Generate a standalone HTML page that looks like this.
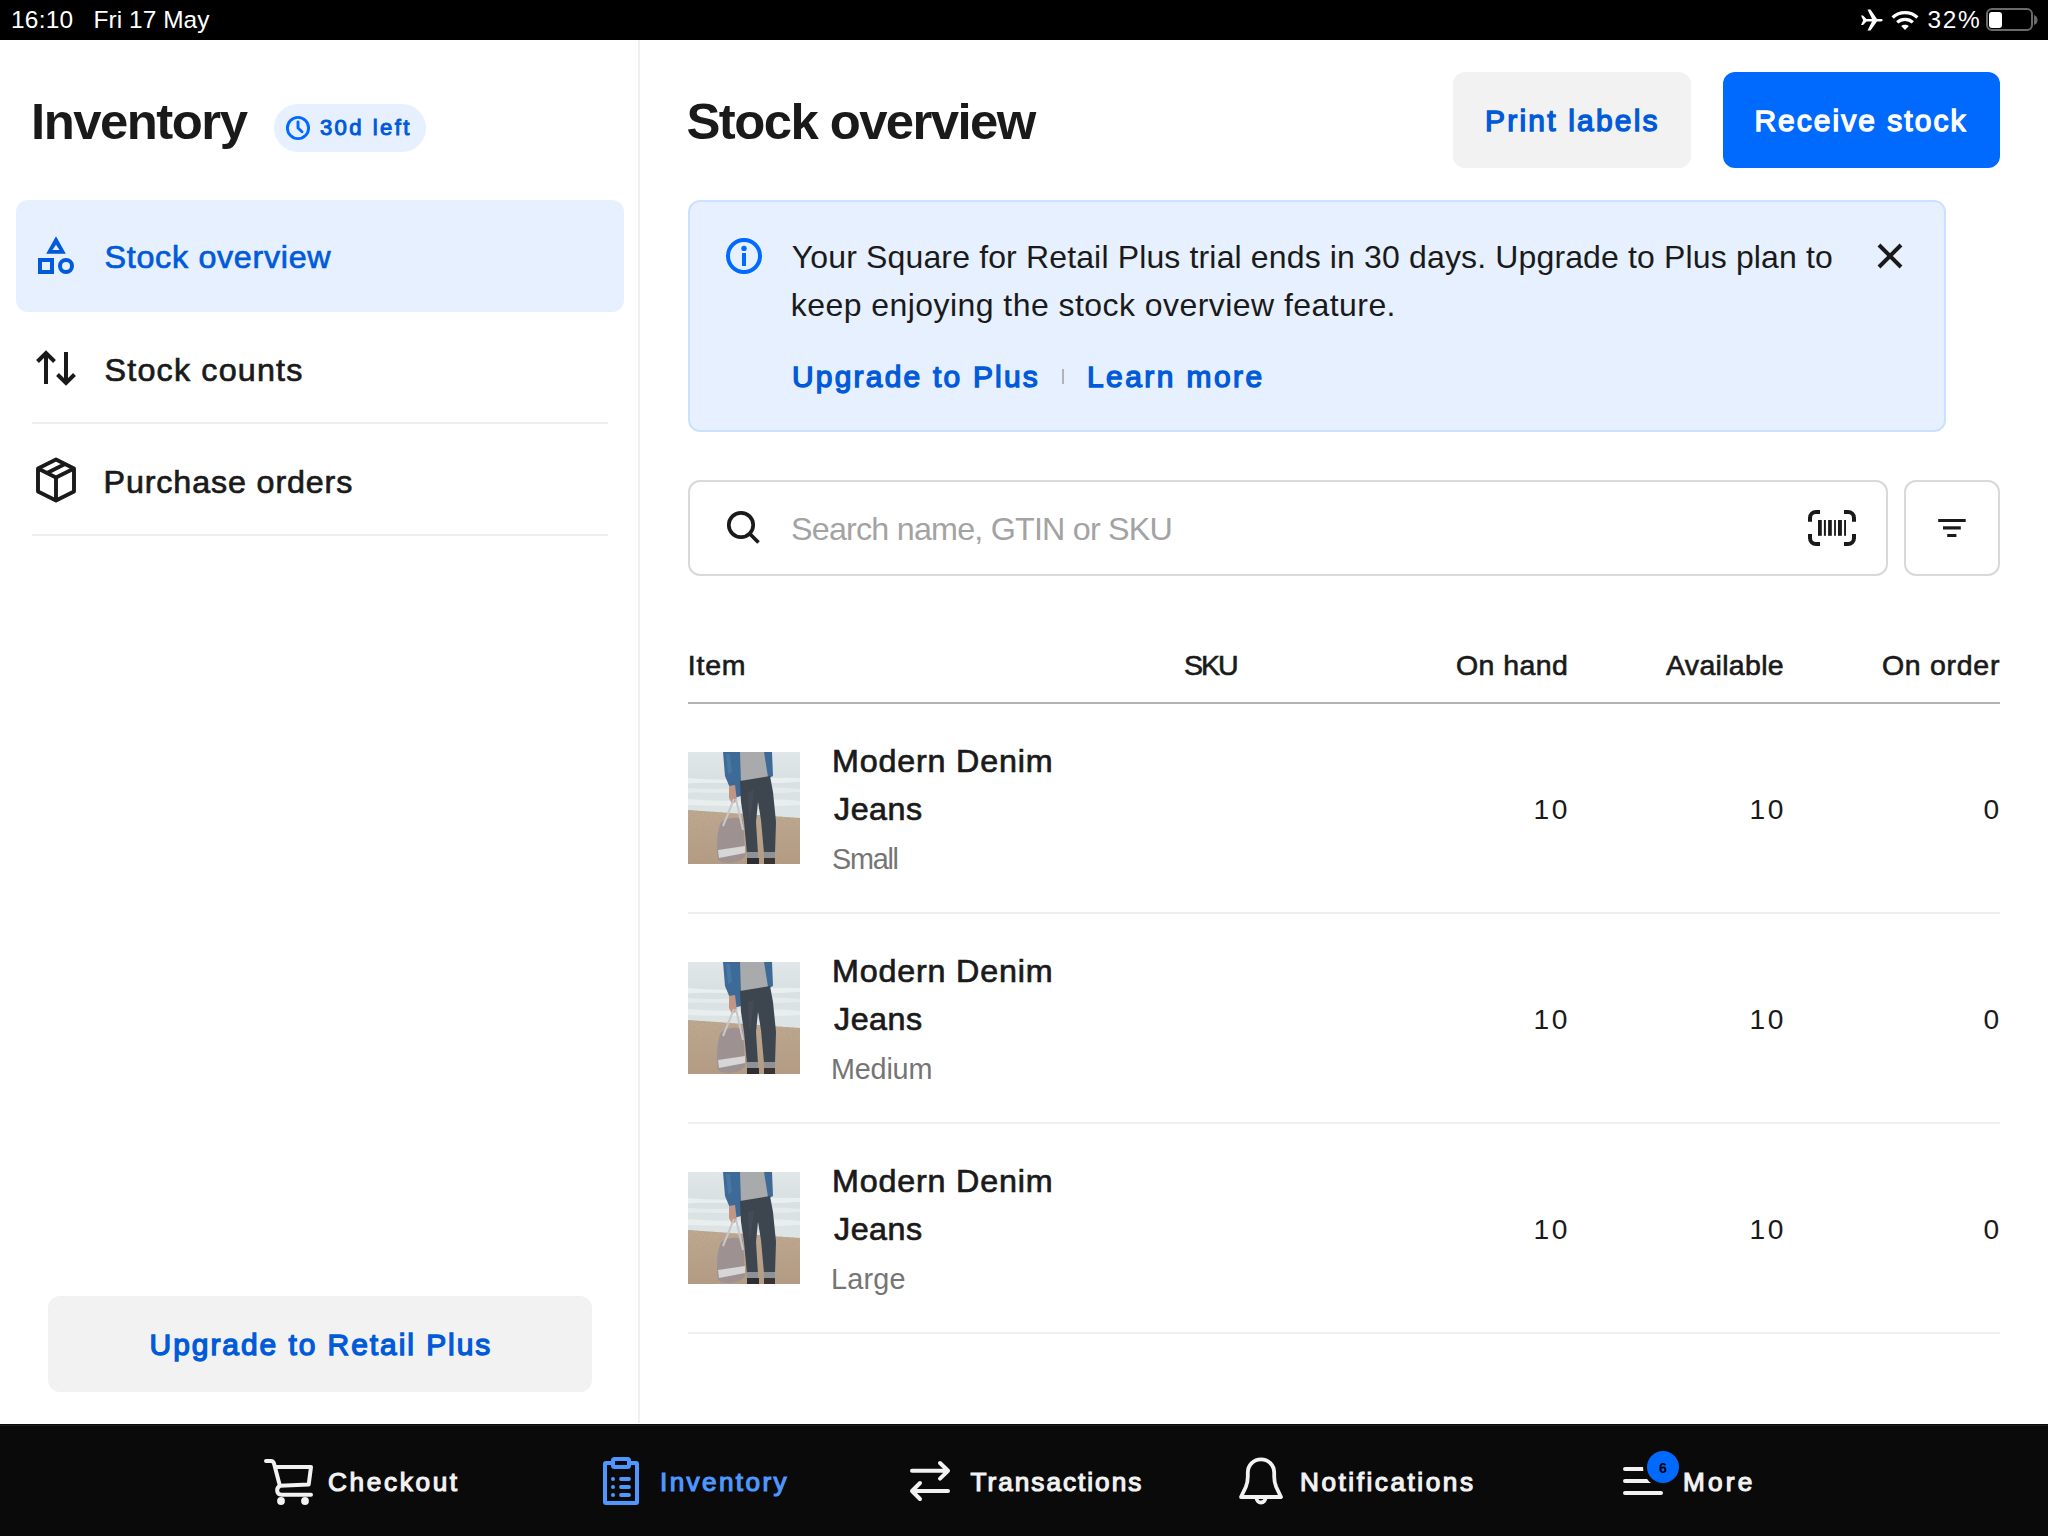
<!DOCTYPE html>
<html><head><meta charset="utf-8"><title>Stock overview</title>
<style>
html,body{margin:0;padding:0;}
body{width:2048px;height:1536px;position:relative;overflow:hidden;background:#fff;font-family:"Liberation Sans",sans-serif;}
.t{position:absolute;white-space:nowrap;line-height:1;}
.b{position:absolute;}
</style></head><body>
<div class="b" style="left:0px;top:0px;width:2048px;height:40px;background:#000;border-radius:0px;"></div>
<div class="t" style="left:11.00px;top:8.10px;font-size:24.45px;letter-spacing:0.250px;color:#fff;">16:10</div>
<div class="t" style="left:93.60px;top:8.10px;font-size:24.45px;letter-spacing:0.044px;color:#fff;">Fri 17 May</div>
<div class="t" style="left:1927.50px;top:8.00px;font-size:24.45px;letter-spacing:1.600px;color:#fff;">32%</div>
<svg class="b" style="left:1858px;top:7px" width="28" height="26" viewBox="0 0 28 26"><path fill="#fff" d="M3 8.5 L5 8.5 L8.5 12 L14 12 L9.5 2.5 L12.5 2.5 L19 12 L23 12 C25 12 25.5 14 23 14.5 L19 14.5 L12.5 23.5 L9.5 23.5 L14 14.5 L8.5 14.5 L5 18 L3 18 L5.2 13.2 Z"/></svg>
<svg class="b" style="left:1889px;top:8px" width="32" height="24" viewBox="0 0 32 24"><path fill="#fff" d="M16 22 L12.2 18 C14.2 16.2 17.8 16.2 19.8 18 Z"/><path fill="none" stroke="#fff" stroke-width="3.2" d="M8.2 14.3 C12.5 10.3 19.5 10.3 23.8 14.3"/><path fill="none" stroke="#fff" stroke-width="3.2" d="M3.6 9.5 C10.5 3 21.5 3 28.4 9.5"/></svg>
<div class="b" style="left:1985.5px;top:8.2px;width:47.5px;height:23.2px;background:transparent;border-radius:6px;border:2px solid #6a6a6a;box-sizing:border-box;"></div>
<div class="b" style="left:1989px;top:12px;width:13px;height:15.7px;background:#fff;border-radius:3px;"></div>
<svg class="b" style="left:2034px;top:15px" width="6" height="10" viewBox="0 0 6 10"><path fill="#6a6a6a" d="M0 0 C3 1 3.5 3 3.5 5 C3.5 7 3 9 0 10 Z"/></svg>
<div class="b" style="left:638px;top:40px;width:2px;height:1383px;background:#f0f0f0;border-radius:0px;"></div>
<div class="t" style="left:31.00px;top:97.00px;font-size:50.87px;letter-spacing:-1.500px;color:#1a1a1a;font-weight:700;">Inventory</div>
<div class="b" style="left:274px;top:104px;width:152px;height:48px;background:#e6f0ff;border-radius:24px;"></div>
<svg class="b" style="left:284px;top:114px" width="28" height="28" viewBox="0 0 28 28"><circle cx="14" cy="14" r="10.6" fill="none" stroke="#006aff" stroke-width="2.9"/><path d="M14 8 V14 L18 17.8" fill="none" stroke="#006aff" stroke-width="2.9" stroke-linecap="round" stroke-linejoin="round"/></svg>
<div class="t" style="left:319.90px;top:116.80px;font-size:22.11px;letter-spacing:2.429px;color:#005ad9;-webkit-text-stroke:0.99px #005ad9;">30d left</div>
<div class="b" style="left:16px;top:200px;width:608px;height:112px;background:#e6f0ff;border-radius:12px;"></div>
<svg class="b" style="left:26px;top:226px" width="60" height="60" viewBox="0 0 60 60"><path fill="#005ad9" fill-rule="evenodd" d="M30 10.3 L39.8 27.8 L20.2 27.8 Z M30 18.7 L26.5 23.9 L33.5 23.9 Z"/><rect x="14" y="34" width="12" height="12" fill="none" stroke="#005ad9" stroke-width="4"/><circle cx="40" cy="40" r="6" fill="none" stroke="#005ad9" stroke-width="4"/></svg>
<div class="t" style="left:104.60px;top:241.20px;font-size:32.28px;letter-spacing:0.692px;color:#005ad9;-webkit-text-stroke:0.71px #005ad9;">Stock overview</div>
<svg class="b" style="left:26px;top:338px" width="60" height="60" viewBox="0 0 60 60"><path fill="none" stroke="#1a1a1a" stroke-width="4" d="M20 46 V15 M11.5 23.5 L20 15 L28.5 23.5 M40 14 V45 M31.5 36.5 L40 45 L48.5 36.5"/></svg>
<div class="t" style="left:104.60px;top:354.00px;font-size:32.28px;letter-spacing:1.182px;color:#1a1a1a;-webkit-text-stroke:0.71px #1a1a1a;">Stock counts</div>
<div class="b" style="left:32px;top:422px;width:576px;height:2px;background:#f0f0f0;border-radius:0px;"></div>
<svg class="b" style="left:26px;top:450px" width="60" height="60" viewBox="0 0 60 60"><path fill="none" stroke="#1a1a1a" stroke-width="3.9" stroke-linejoin="round" d="M30 9.5 L12 18.5 V41.5 L30 50.5 L48 41.5 V18.5 Z M12 18.5 L30 27.5 L48 18.5 M30 27.5 V50.5 M39 14 L21 23"/></svg>
<div class="t" style="left:103.60px;top:466.00px;font-size:32.28px;letter-spacing:0.857px;color:#1a1a1a;-webkit-text-stroke:0.71px #1a1a1a;">Purchase orders</div>
<div class="b" style="left:32px;top:534px;width:576px;height:2px;background:#f0f0f0;border-radius:0px;"></div>
<div class="b" style="left:48px;top:1296px;width:544px;height:96px;background:#f2f2f2;border-radius:12px;"></div>
<div class="t" style="left:149.60px;top:1330.00px;font-size:29.96px;letter-spacing:1.952px;color:#005ad9;-webkit-text-stroke:1.35px #005ad9;">Upgrade to Retail Plus</div>
<div class="t" style="left:686.50px;top:97.30px;font-size:50.87px;letter-spacing:-1.577px;color:#1a1a1a;font-weight:700;">Stock overview</div>
<div class="b" style="left:1453px;top:72px;width:238px;height:96px;background:#f2f2f2;border-radius:12px;"></div>
<div class="t" style="left:1485.10px;top:106.00px;font-size:29.96px;letter-spacing:2.200px;color:#005ad9;-webkit-text-stroke:1.35px #005ad9;">Print labels</div>
<div class="b" style="left:1723px;top:72px;width:277px;height:96px;background:#006aff;border-radius:12px;"></div>
<div class="t" style="left:1754.40px;top:106.00px;font-size:29.96px;letter-spacing:2.050px;color:#fff;-webkit-text-stroke:1.35px #fff;">Receive stock</div>
<div class="b" style="left:688px;top:200px;width:1258px;height:232px;background:#e6f0ff;border-radius:12px;border:2px solid #cce1ff;box-sizing:border-box;"></div>
<svg class="b" style="left:714px;top:226px" width="60" height="60" viewBox="0 0 60 60"><circle cx="30" cy="30" r="16" fill="none" stroke="#006aff" stroke-width="4"/><circle cx="30" cy="22.4" r="2.7" fill="#006aff"/><rect x="28" y="27" width="4" height="13" fill="#006aff"/></svg>
<svg class="b" style="left:1860px;top:226px" width="60" height="60" viewBox="0 0 60 60"><path fill="none" stroke="#1a1a1a" stroke-width="4" d="M19 19 L41 41 M41 19 L19 41"/></svg>
<div class="t" style="left:791.80px;top:240.80px;font-size:31.99px;letter-spacing:0.151px;color:#1a1a1a;">Your Square for Retail Plus trial ends in 30 days. Upgrade to Plus plan to</div>
<div class="t" style="left:790.80px;top:288.80px;font-size:31.99px;letter-spacing:0.450px;color:#1a1a1a;">keep enjoying the stock overview feature.</div>
<div class="t" style="left:792.00px;top:362.00px;font-size:29.96px;letter-spacing:2.214px;color:#005ad9;-webkit-text-stroke:1.35px #005ad9;">Upgrade to Plus</div>
<div class="b" style="left:1062px;top:369px;width:2px;height:15px;background:#b3b3b3;border-radius:0px;"></div>
<div class="t" style="left:1087.00px;top:362.00px;font-size:29.96px;letter-spacing:2.444px;color:#005ad9;-webkit-text-stroke:1.35px #005ad9;">Learn more</div>
<div class="b" style="left:688px;top:480px;width:1200px;height:96px;background:#fff;border-radius:12px;border:2px solid #d9d9d9;box-sizing:border-box;"></div>
<svg class="b" style="left:714px;top:498px" width="60" height="60" viewBox="0 0 60 60"><circle cx="27" cy="27" r="12.2" fill="none" stroke="#1a1a1a" stroke-width="3.7"/><path d="M35.5 35.5 L44.5 44.5" stroke="#1a1a1a" stroke-width="3.7"/></svg>
<div class="t" style="left:791.00px;top:513.40px;font-size:32.28px;letter-spacing:-0.783px;color:#a3a3a3;">Search name, GTIN or SKU</div>
<svg class="b" style="left:1800px;top:498px" width="64" height="60" viewBox="0 0 64 60"><path fill="none" stroke="#1a1a1a" stroke-width="4" d="M20 14 H16 A6 6 0 0 0 10 20 V23.7 M44 14 H48 A6 6 0 0 1 54 20 V23.7 M10 36 V40 A6 6 0 0 0 16 46 H20 M54 36 V40 A6 6 0 0 1 48 46 H44"/><g fill="#1a1a1a"><rect x="18" y="22" width="3.8" height="15.8"/><rect x="23.9" y="22" width="2" height="15.8"/><rect x="28.1" y="22" width="3.7" height="15.8"/><rect x="34.1" y="22" width="1.8" height="15.8"/><rect x="38" y="22" width="3.9" height="15.8"/><rect x="44.1" y="22" width="1.9" height="15.8"/></g></svg>
<div class="b" style="left:1904px;top:480px;width:96px;height:96px;background:#fff;border-radius:12px;border:2px solid #d9d9d9;box-sizing:border-box;"></div>
<svg class="b" style="left:1930px;top:510px" width="40" height="36" viewBox="0 0 40 36"><g fill="#1a1a1a"><rect x="8.2" y="9" width="27.5" height="3"/><rect x="13" y="16.3" width="17.8" height="3.2"/><rect x="17.2" y="24" width="9.2" height="3"/></g></svg>
<div class="t" style="left:687.80px;top:650.90px;font-size:28.49px;letter-spacing:0.800px;color:#1a1a1a;-webkit-text-stroke:0.63px #1a1a1a;">Item</div>
<div class="t" style="left:1184.00px;top:650.90px;font-size:28.49px;letter-spacing:-2.000px;color:#1a1a1a;-webkit-text-stroke:0.63px #1a1a1a;">SKU</div>
<div class="t" style="left:1456.00px;top:650.90px;font-size:28.49px;letter-spacing:0.433px;color:#1a1a1a;-webkit-text-stroke:0.63px #1a1a1a;">On hand</div>
<div class="t" style="left:1666.00px;top:650.90px;font-size:28.49px;letter-spacing:0.325px;color:#1a1a1a;-webkit-text-stroke:0.63px #1a1a1a;">Available</div>
<div class="t" style="left:1882.00px;top:650.90px;font-size:28.49px;letter-spacing:0.714px;color:#1a1a1a;-webkit-text-stroke:0.63px #1a1a1a;">On order</div>
<div class="b" style="left:688px;top:702px;width:1312px;height:2px;background:#b3b3b3;border-radius:0px;"></div>
<svg class="b" style="left:688px;top:752px" width="112" height="112" viewBox="0 0 112 112"><defs><filter id="bl" x="0" y="0" width="100%" height="100%"><feGaussianBlur stdDeviation="0.6"/></filter>
<filter id="nz" x="0" y="0" width="100%" height="100%"><feTurbulence type="fractalNoise" baseFrequency="0.6" numOctaves="2" seed="3"/><feColorMatrix values="0 0 0 0 0.45  0 0 0 0 0.36  0 0 0 0 0.28  0 0 0 5 -2.3"/></filter>
<linearGradient id="sky" x1="0" y1="0" x2="0" y2="1"><stop offset="0" stop-color="#e1e7e9"/><stop offset="0.25" stop-color="#d8e0e2"/><stop offset="0.55" stop-color="#dde4e5"/></linearGradient>
<linearGradient id="sand" x1="0" y1="0" x2="0" y2="1"><stop offset="0" stop-color="#bfa98f"/><stop offset="1" stop-color="#b39a80"/></linearGradient>
<clipPath id="sc"><path d="M0 58 L112 66 V112 H0 Z"/></clipPath></defs>
<g filter="url(#bl)">
<rect width="112" height="112" fill="url(#sky)"/>
<path d="M0 26 Q30 29 60 27 T112 26 V30 Q80 32 40 31 T0 32Z" fill="#eef2f2" opacity="0.8"/>
<path d="M0 36 Q25 38 55 36 T112 37 V40 Q80 42 40 41 T0 41Z" fill="#eaf0f0" opacity="0.7"/>
<path d="M0 47 Q30 50 60 48 T112 49 V53 Q80 55 40 54 T0 53Z" fill="#eef2f2" opacity="0.7"/>
<path d="M0 58 L112 66 V112 H0 Z" fill="url(#sand)"/>
<rect width="112" height="112" filter="url(#nz)" clip-path="url(#sc)" opacity="0.7"/>
<path d="M35 0 H53 V44 L46 46 L42 36 L37 24 Z" fill="#3d6b97"/>
<path d="M38 2 L42 2 L44 20 L40 22 Z" fill="#4f7eaa" opacity="0.6"/>
<path d="M74 0 H84 L85 24 L79 27 L74 20 Z" fill="#3d6b97"/>
<path d="M52 0 H76 L80 25 L66 31 L53 30 Z" fill="#a9aaac"/>
<path d="M41 34 L47 33 L49 49 L44 52 L41 46 Z" fill="#c29684"/>
<path d="M52 29 L82 24 L85 40 L88 70 L87 101 L76 101 L73 68 L70 50 L68 70 L70 102 L59 102 L56 70 L53 50 Z" fill="#3c4550"/>
<path d="M60 40 L66 38 L64 55 L61 70 Z" fill="#4a525c" opacity="0.6"/>
<rect x="59" y="100" width="11" height="6" fill="#8e9196"/><rect x="76" y="100" width="11" height="6" fill="#8e9196"/>
<rect x="59" y="106" width="12" height="6" fill="#2e2e30"/><rect x="76" y="106" width="11" height="6" fill="#3a3331"/>
<path d="M32 72 C36 65 52 64 55 68 L57 104 C52 112 36 113 30 108 C28 95 29 82 32 72 Z" fill="#9e9191"/>
<path d="M30 98 L57 94 V101 L31 106 Z" fill="#d6d6d6"/>
<path d="M35 74 L46 47 M55 78 L48 47" fill="none" stroke="#c8c8ca" stroke-width="2"/>
</g></svg>
<div class="t" style="left:832.00px;top:744.90px;font-size:32.28px;letter-spacing:0.818px;color:#1a1a1a;-webkit-text-stroke:0.71px #1a1a1a;">Modern Denim</div>
<div class="t" style="left:834.00px;top:792.90px;font-size:32.28px;letter-spacing:0.500px;color:#1a1a1a;-webkit-text-stroke:0.71px #1a1a1a;">Jeans</div>
<div class="t" style="left:832.00px;top:845.00px;font-size:28.79px;letter-spacing:-1.250px;color:#757575;">Small</div>
<div class="t" style="left:1533.50px;top:794.90px;font-size:28.20px;letter-spacing:2.500px;color:#1a1a1a;">10</div>
<div class="t" style="left:1749.50px;top:794.90px;font-size:28.20px;letter-spacing:2.500px;color:#1a1a1a;">10</div>
<div class="t" style="left:1983.40px;top:794.90px;font-size:28.20px;letter-spacing:0.000px;color:#1a1a1a;">0</div>
<div class="b" style="left:688px;top:912px;width:1312px;height:2px;background:#f0f0f0;border-radius:0px;"></div>
<svg class="b" style="left:688px;top:962px" width="112" height="112" viewBox="0 0 112 112"><defs><filter id="bl" x="0" y="0" width="100%" height="100%"><feGaussianBlur stdDeviation="0.6"/></filter>
<filter id="nz" x="0" y="0" width="100%" height="100%"><feTurbulence type="fractalNoise" baseFrequency="0.6" numOctaves="2" seed="3"/><feColorMatrix values="0 0 0 0 0.45  0 0 0 0 0.36  0 0 0 0 0.28  0 0 0 5 -2.3"/></filter>
<linearGradient id="sky" x1="0" y1="0" x2="0" y2="1"><stop offset="0" stop-color="#e1e7e9"/><stop offset="0.25" stop-color="#d8e0e2"/><stop offset="0.55" stop-color="#dde4e5"/></linearGradient>
<linearGradient id="sand" x1="0" y1="0" x2="0" y2="1"><stop offset="0" stop-color="#bfa98f"/><stop offset="1" stop-color="#b39a80"/></linearGradient>
<clipPath id="sc"><path d="M0 58 L112 66 V112 H0 Z"/></clipPath></defs>
<g filter="url(#bl)">
<rect width="112" height="112" fill="url(#sky)"/>
<path d="M0 26 Q30 29 60 27 T112 26 V30 Q80 32 40 31 T0 32Z" fill="#eef2f2" opacity="0.8"/>
<path d="M0 36 Q25 38 55 36 T112 37 V40 Q80 42 40 41 T0 41Z" fill="#eaf0f0" opacity="0.7"/>
<path d="M0 47 Q30 50 60 48 T112 49 V53 Q80 55 40 54 T0 53Z" fill="#eef2f2" opacity="0.7"/>
<path d="M0 58 L112 66 V112 H0 Z" fill="url(#sand)"/>
<rect width="112" height="112" filter="url(#nz)" clip-path="url(#sc)" opacity="0.7"/>
<path d="M35 0 H53 V44 L46 46 L42 36 L37 24 Z" fill="#3d6b97"/>
<path d="M38 2 L42 2 L44 20 L40 22 Z" fill="#4f7eaa" opacity="0.6"/>
<path d="M74 0 H84 L85 24 L79 27 L74 20 Z" fill="#3d6b97"/>
<path d="M52 0 H76 L80 25 L66 31 L53 30 Z" fill="#a9aaac"/>
<path d="M41 34 L47 33 L49 49 L44 52 L41 46 Z" fill="#c29684"/>
<path d="M52 29 L82 24 L85 40 L88 70 L87 101 L76 101 L73 68 L70 50 L68 70 L70 102 L59 102 L56 70 L53 50 Z" fill="#3c4550"/>
<path d="M60 40 L66 38 L64 55 L61 70 Z" fill="#4a525c" opacity="0.6"/>
<rect x="59" y="100" width="11" height="6" fill="#8e9196"/><rect x="76" y="100" width="11" height="6" fill="#8e9196"/>
<rect x="59" y="106" width="12" height="6" fill="#2e2e30"/><rect x="76" y="106" width="11" height="6" fill="#3a3331"/>
<path d="M32 72 C36 65 52 64 55 68 L57 104 C52 112 36 113 30 108 C28 95 29 82 32 72 Z" fill="#9e9191"/>
<path d="M30 98 L57 94 V101 L31 106 Z" fill="#d6d6d6"/>
<path d="M35 74 L46 47 M55 78 L48 47" fill="none" stroke="#c8c8ca" stroke-width="2"/>
</g></svg>
<div class="t" style="left:832.00px;top:954.90px;font-size:32.28px;letter-spacing:0.818px;color:#1a1a1a;-webkit-text-stroke:0.71px #1a1a1a;">Modern Denim</div>
<div class="t" style="left:834.00px;top:1002.90px;font-size:32.28px;letter-spacing:0.500px;color:#1a1a1a;-webkit-text-stroke:0.71px #1a1a1a;">Jeans</div>
<div class="t" style="left:831.00px;top:1055.00px;font-size:28.79px;letter-spacing:-0.200px;color:#757575;">Medium</div>
<div class="t" style="left:1533.50px;top:1004.90px;font-size:28.20px;letter-spacing:2.500px;color:#1a1a1a;">10</div>
<div class="t" style="left:1749.50px;top:1004.90px;font-size:28.20px;letter-spacing:2.500px;color:#1a1a1a;">10</div>
<div class="t" style="left:1983.40px;top:1004.90px;font-size:28.20px;letter-spacing:0.000px;color:#1a1a1a;">0</div>
<div class="b" style="left:688px;top:1122px;width:1312px;height:2px;background:#f0f0f0;border-radius:0px;"></div>
<svg class="b" style="left:688px;top:1172px" width="112" height="112" viewBox="0 0 112 112"><defs><filter id="bl" x="0" y="0" width="100%" height="100%"><feGaussianBlur stdDeviation="0.6"/></filter>
<filter id="nz" x="0" y="0" width="100%" height="100%"><feTurbulence type="fractalNoise" baseFrequency="0.6" numOctaves="2" seed="3"/><feColorMatrix values="0 0 0 0 0.45  0 0 0 0 0.36  0 0 0 0 0.28  0 0 0 5 -2.3"/></filter>
<linearGradient id="sky" x1="0" y1="0" x2="0" y2="1"><stop offset="0" stop-color="#e1e7e9"/><stop offset="0.25" stop-color="#d8e0e2"/><stop offset="0.55" stop-color="#dde4e5"/></linearGradient>
<linearGradient id="sand" x1="0" y1="0" x2="0" y2="1"><stop offset="0" stop-color="#bfa98f"/><stop offset="1" stop-color="#b39a80"/></linearGradient>
<clipPath id="sc"><path d="M0 58 L112 66 V112 H0 Z"/></clipPath></defs>
<g filter="url(#bl)">
<rect width="112" height="112" fill="url(#sky)"/>
<path d="M0 26 Q30 29 60 27 T112 26 V30 Q80 32 40 31 T0 32Z" fill="#eef2f2" opacity="0.8"/>
<path d="M0 36 Q25 38 55 36 T112 37 V40 Q80 42 40 41 T0 41Z" fill="#eaf0f0" opacity="0.7"/>
<path d="M0 47 Q30 50 60 48 T112 49 V53 Q80 55 40 54 T0 53Z" fill="#eef2f2" opacity="0.7"/>
<path d="M0 58 L112 66 V112 H0 Z" fill="url(#sand)"/>
<rect width="112" height="112" filter="url(#nz)" clip-path="url(#sc)" opacity="0.7"/>
<path d="M35 0 H53 V44 L46 46 L42 36 L37 24 Z" fill="#3d6b97"/>
<path d="M38 2 L42 2 L44 20 L40 22 Z" fill="#4f7eaa" opacity="0.6"/>
<path d="M74 0 H84 L85 24 L79 27 L74 20 Z" fill="#3d6b97"/>
<path d="M52 0 H76 L80 25 L66 31 L53 30 Z" fill="#a9aaac"/>
<path d="M41 34 L47 33 L49 49 L44 52 L41 46 Z" fill="#c29684"/>
<path d="M52 29 L82 24 L85 40 L88 70 L87 101 L76 101 L73 68 L70 50 L68 70 L70 102 L59 102 L56 70 L53 50 Z" fill="#3c4550"/>
<path d="M60 40 L66 38 L64 55 L61 70 Z" fill="#4a525c" opacity="0.6"/>
<rect x="59" y="100" width="11" height="6" fill="#8e9196"/><rect x="76" y="100" width="11" height="6" fill="#8e9196"/>
<rect x="59" y="106" width="12" height="6" fill="#2e2e30"/><rect x="76" y="106" width="11" height="6" fill="#3a3331"/>
<path d="M32 72 C36 65 52 64 55 68 L57 104 C52 112 36 113 30 108 C28 95 29 82 32 72 Z" fill="#9e9191"/>
<path d="M30 98 L57 94 V101 L31 106 Z" fill="#d6d6d6"/>
<path d="M35 74 L46 47 M55 78 L48 47" fill="none" stroke="#c8c8ca" stroke-width="2"/>
</g></svg>
<div class="t" style="left:832.00px;top:1164.90px;font-size:32.28px;letter-spacing:0.818px;color:#1a1a1a;-webkit-text-stroke:0.71px #1a1a1a;">Modern Denim</div>
<div class="t" style="left:834.00px;top:1212.90px;font-size:32.28px;letter-spacing:0.500px;color:#1a1a1a;-webkit-text-stroke:0.71px #1a1a1a;">Jeans</div>
<div class="t" style="left:831.00px;top:1265.00px;font-size:28.79px;letter-spacing:0.250px;color:#757575;">Large</div>
<div class="t" style="left:1533.50px;top:1214.90px;font-size:28.20px;letter-spacing:2.500px;color:#1a1a1a;">10</div>
<div class="t" style="left:1749.50px;top:1214.90px;font-size:28.20px;letter-spacing:2.500px;color:#1a1a1a;">10</div>
<div class="t" style="left:1983.40px;top:1214.90px;font-size:28.20px;letter-spacing:0.000px;color:#1a1a1a;">0</div>
<div class="b" style="left:688px;top:1332px;width:1312px;height:2px;background:#f0f0f0;border-radius:0px;"></div>
<div class="b" style="left:0px;top:1424px;width:2048px;height:112px;background:#0a0a0a;border-radius:0px;"></div>
<div class="b" style="left:0px;top:1425px;width:2048px;height:1px;background:#1c1c1c;border-radius:0px;"></div>
<svg class="b" style="left:256px;top:1450px" width="64" height="64" viewBox="0 0 64 64"><g fill="none" stroke="#f2f2f2" stroke-width="4" stroke-linecap="round" stroke-linejoin="round"><path d="M10 11 H15 C16.5 11 17.5 12 18 13.5 L23.8 35.6"/><path d="M19.5 17 H55 L52.7 34.6 L24 35.8 C20 37.5 20 44.8 25.5 44.8 H55"/></g><circle cx="25" cy="51" r="3.9" fill="#f2f2f2"/><circle cx="49" cy="51" r="3.9" fill="#f2f2f2"/></svg>
<div class="t" style="left:328.00px;top:1469.00px;font-size:26.16px;letter-spacing:2.657px;color:#f2f2f2;-webkit-text-stroke:1.18px #f2f2f2;">Checkout</div>
<svg class="b" style="left:590px;top:1450px" width="64" height="64" viewBox="0 0 64 64"><rect x="15" y="13" width="32" height="40" rx="1" fill="none" stroke="#4d97ff" stroke-width="4"/><rect x="23" y="9" width="16" height="8" rx="1.5" fill="#0a0a0a" stroke="#4d97ff" stroke-width="4"/><g fill="#4d97ff"><circle cx="23" cy="29" r="2"/><circle cx="23" cy="37" r="2"/><circle cx="23" cy="45" r="2"/></g><g stroke="#4d97ff" stroke-width="3.8" stroke-linecap="round"><path d="M31 29 H39 M31 37 H39 M31 45 H39"/></g></svg>
<div class="t" style="left:660.00px;top:1469.00px;font-size:26.16px;letter-spacing:2.375px;color:#4d97ff;-webkit-text-stroke:1.18px #4d97ff;">Inventory</div>
<svg class="b" style="left:898px;top:1450px" width="64" height="64" viewBox="0 0 64 64"><g fill="none" stroke="#f2f2f2" stroke-width="4" stroke-linecap="round" stroke-linejoin="round"><path d="M14 20.8 H50 M42 13 L50 20.8 L42 28.7 M50 41 H14 M22 33 L14 41 L22 49"/></g></svg>
<div class="t" style="left:970.50px;top:1469.00px;font-size:26.16px;letter-spacing:2.000px;color:#f2f2f2;-webkit-text-stroke:1.18px #f2f2f2;">Transactions</div>
<svg class="b" style="left:1229px;top:1450px" width="64" height="64" viewBox="0 0 64 64"><g fill="none" stroke="#f2f2f2" stroke-width="3.8" stroke-linejoin="round"><path d="M12 47 L16.8 37 C18.3 33.5 18.8 30 18.8 26.5 V22.5 A13.2 13.2 0 0 1 45.2 22.5 V26.5 C45.2 30 45.7 33.5 47.2 37 L52 47 Z"/><path d="M27.5 48 A4.5 4.5 0 0 0 36.5 48"/></g></svg>
<div class="t" style="left:1300.00px;top:1469.00px;font-size:26.16px;letter-spacing:2.542px;color:#f2f2f2;-webkit-text-stroke:1.18px #f2f2f2;">Notifications</div>
<svg class="b" style="left:1610px;top:1440px" width="80" height="64" viewBox="0 0 80 64"><g stroke="#f2f2f2" stroke-width="4" stroke-linecap="round"><path d="M15 29 H33 M15 41 H41 M15 53 H51"/></g><circle cx="53" cy="27" r="20" fill="#0a0a0a"/><circle cx="53" cy="27" r="16" fill="#006aff"/></svg>
<div class="t" style="left:1659.00px;top:1460.50px;font-size:14.13px;letter-spacing:0.000px;color:#000;font-weight:700;">6</div>
<div class="t" style="left:1682.90px;top:1469.00px;font-size:26.16px;letter-spacing:3.267px;color:#f2f2f2;-webkit-text-stroke:1.18px #f2f2f2;">More</div>
</body></html>
